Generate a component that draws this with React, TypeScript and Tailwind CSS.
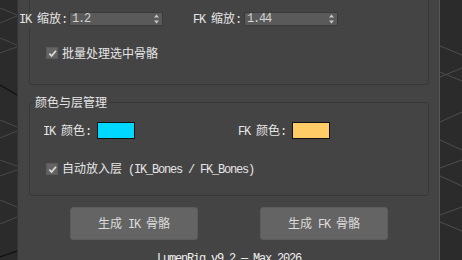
import React from 'react';

const L = ({ children }: { children: React.ReactNode }) => (
  <span className="whitespace-pre font-['Liberation_Mono',monospace] tracking-[-1.2px]">{children}</span>
);

const Spinner = ({ value }: { value: string }) => (
  <div className="flex h-[14px] w-[94px] items-center justify-between border border-[#3a3a3a] bg-[#5a5a5a] pl-[2px] pr-[3px] text-[#d2d2d2]">
    <L>{value}</L>
    <svg width="5" height="10" viewBox="0 0 5 10">
      <path d="M2.5 0.5 L5 3.5 L0 3.5 Z" fill="#c8c8c8" />
      <path d="M2.5 9.5 L5 6.5 L0 6.5 Z" fill="#c8c8c8" />
    </svg>
  </div>
);

const Check = () => (
  <div className="flex h-[12px] w-[12px] items-center justify-center border border-[#5a5a5a] bg-[#636363]">
    <svg width="9" height="9" viewBox="0 0 10 10">
      <path d="M1.5 5.2 L4 7.8 L8.8 2" stroke="#dadada" strokeWidth="2" fill="none" />
    </svg>
  </div>
);

const Swatch = ({ color }: { color: string }) => (
  <div className="h-[17px] w-[38px] border border-[#111]" style={{ backgroundColor: color }} />
);

const LeftGrid = () => (
  <svg width="17" height="260" viewBox="0 0 17 260">
    <g stroke="#4a4a4a" strokeWidth="1">
      <line x1="0" y1="8" x2="17" y2="15" />
      <line x1="0" y1="23" x2="17" y2="16" />
      <line x1="0" y1="38" x2="17" y2="45" />
      <line x1="0" y1="53" x2="17" y2="47" />
      <line x1="0" y1="120" x2="17" y2="127" />
      <line x1="0" y1="138" x2="17" y2="131" />
      <line x1="0" y1="160" x2="17" y2="166" />
      <line x1="0" y1="176" x2="17" y2="170" />
      <line x1="0" y1="200" x2="17" y2="207" />
      <line x1="0" y1="224" x2="17" y2="217" />
    </g>
    <line x1="0" y1="85" x2="17" y2="95" stroke="#111" strokeWidth="1.2" />
    <line x1="0" y1="257" x2="17" y2="251" stroke="#111" strokeWidth="1.2" />
  </svg>
);

const RightGrid = () => (
  <svg width="22" height="260" viewBox="0 0 22 260">
    <g stroke="#4e4e4e" strokeWidth="1">
      <line x1="0" y1="46" x2="22" y2="55" />
      <line x1="0" y1="77" x2="22" y2="68" />
      <line x1="0" y1="72" x2="22" y2="81" />
      <line x1="0" y1="122" x2="22" y2="112" />
      <line x1="0" y1="140" x2="22" y2="150" />
      <line x1="0" y1="168" x2="22" y2="160" />
      <line x1="0" y1="176" x2="22" y2="186" />
      <line x1="0" y1="215" x2="22" y2="207" />
      <line x1="0" y1="222" x2="22" y2="231" />
    </g>
  </svg>
);

export default function App() {
  return (
    <div className="flex h-[260px] w-[462px] overflow-hidden bg-[#2b2b2b] font-['Noto_Sans_CJK_SC',sans-serif] text-[12px] leading-[12px] text-[#e6e6e6]">
      <div className="w-[17px] shrink-0">
        <LeftGrid />
      </div>

      <div className="flex w-[423px] shrink-0 flex-col border-l border-r border-l-[#333] border-r-[#575757] bg-[#444] pl-[11px] pr-[10px]">
        {/* scale group, top edge scrolled away */}
        <div className="h-[85px] shrink-0 rounded-b-[3px] border-x border-b border-[#383838]">
          <div className="-ml-[11px] mt-[12px] flex h-[14px] items-center">
            <div className="relative flex h-[15px] items-center bg-[#444]">
              <span>
                <L>{'IK\u00a0'}</L>缩放<L>:</L>
              </span>
            </div>
            <div className="ml-[2px]">
              <Spinner value="1.2" />
            </div>
            <div className="ml-[30px] flex h-[15px] items-center">
              <span>
                <L>{'FK\u00a0'}</L>缩放<L>:</L>
              </span>
            </div>
            <div className="ml-[3px]">
              <Spinner value="1.44" />
            </div>
          </div>
          <div className="ml-[16px] mt-[21px] flex items-center gap-[4px]">
            <Check />
            <span>批量处理选中骨骼</span>
          </div>
        </div>

        {/* colour and layer group */}
        <div className="mt-[17px] h-[94px] shrink-0 rounded-[3px] border border-[#383838]">
          <div className="-mt-[7px] ml-[4px] w-fit bg-[#444] px-[1px]">颜色与层管理</div>
          <div className="mt-[14px] flex items-center pl-[13px]">
            <div className="flex w-[195px] items-center">
              <span>
                <L>{'IK\u00a0'}</L>颜色<L>:</L>
              </span>
              <div className="ml-[6px]">
                <Swatch color="#00d8ff" />
              </div>
            </div>
            <div className="flex items-center">
              <span>
                <L>{'FK\u00a0'}</L>颜色<L>:</L>
              </span>
              <div className="ml-[6px]">
                <Swatch color="#ffcc66" />
              </div>
            </div>
          </div>
          <div className="ml-[16px] mt-[23px] flex items-center gap-[4px]">
            <Check />
            <span>
              自动放入层<L>{'\u00a0(IK_Bones / FK_Bones)'}</L>
            </span>
          </div>
        </div>

        <div className="mt-[11px] flex shrink-0 justify-center gap-[62px]">
          <button className="flex h-[33px] w-[128px] items-center justify-center rounded-[3px] border border-[#5c5c5c] bg-[#646464] text-[#dcdcdc]">
            <span>
              生成<L>{'\u00a0IK\u00a0'}</L>骨骼
            </span>
          </button>
          <button className="flex h-[33px] w-[128px] items-center justify-center rounded-[3px] border border-[#5c5c5c] bg-[#646464] text-[#dcdcdc]">
            <span>
              生成<L>{'\u00a0FK\u00a0'}</L>骨骼
            </span>
          </button>
        </div>

        <div className="mt-[11px] shrink-0 text-center text-[#f0f0f0]">
          <L>LumenRig v9.2 — Max 2026</L>
        </div>
      </div>

      <div className="w-[22px] shrink-0">
        <RightGrid />
      </div>
    </div>
  );
}
